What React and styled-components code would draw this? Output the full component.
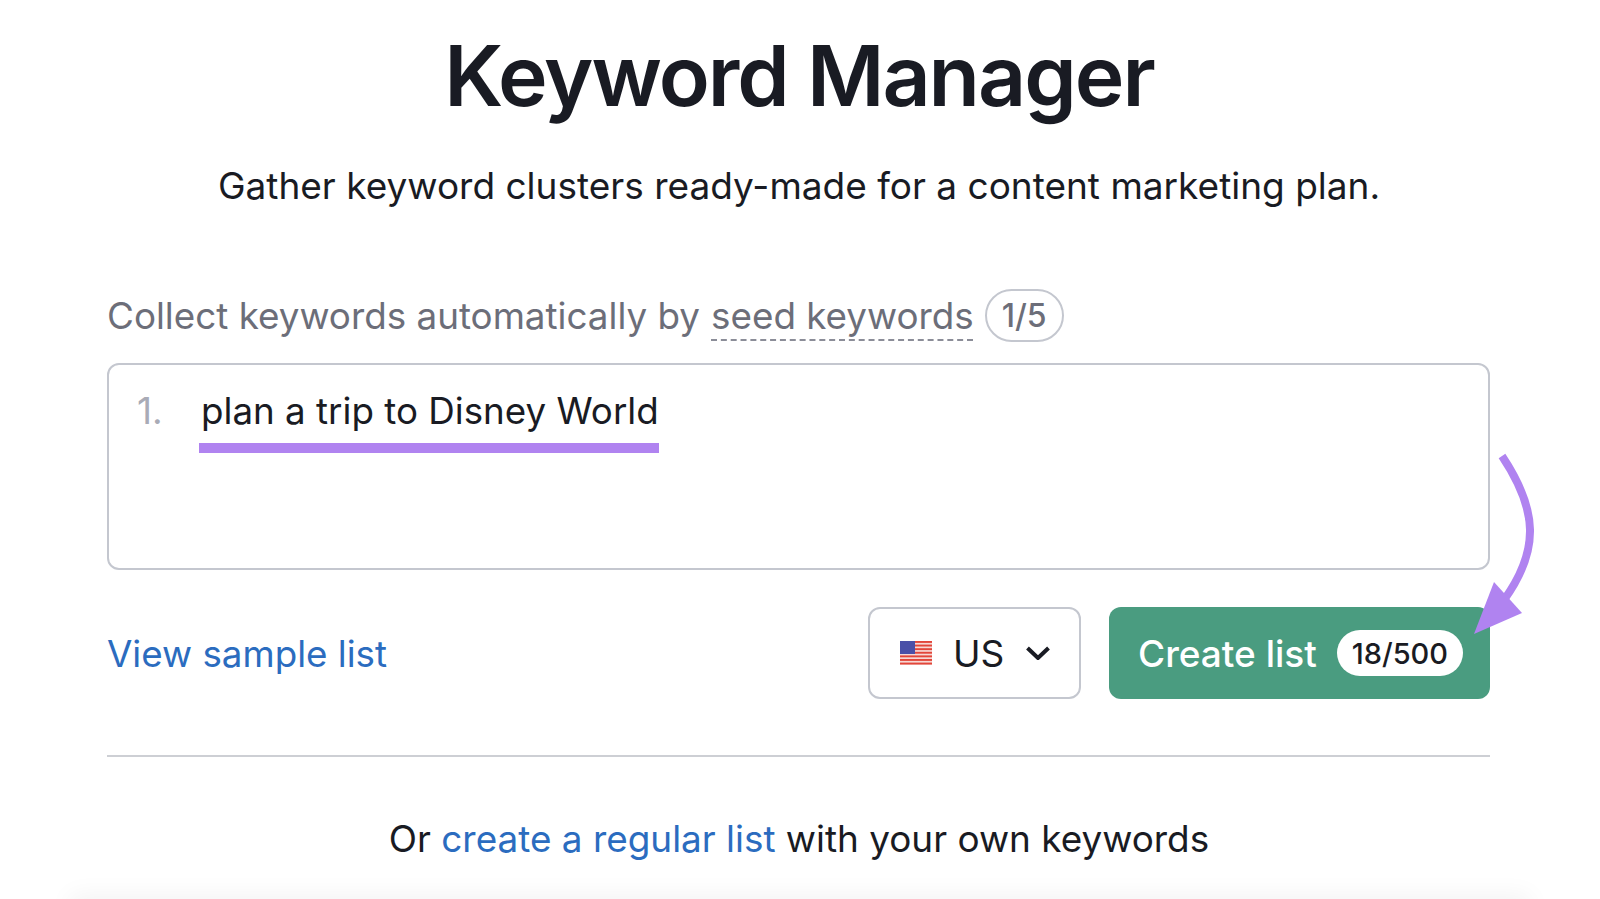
import React from "react";
import styled, { createGlobalStyle } from "styled-components";

const GlobalStyle = createGlobalStyle`
  html, body {
    margin: 0;
    height: 100%;
    background: #fff;
    font-family: Inter, "Liberation Sans", sans-serif;
    overflow: hidden;
  }
`;

const Page = styled.div`
  position: relative;
  width: 1600px;
  height: 899px;
  box-sizing: border-box;
  padding: 0 110px 0 107px;
  display: flex;
  flex-direction: column;
  overflow: hidden;
`;

const Title = styled.h1`
  margin: 26px 0 0;
  padding-left: 1px;
  font-size: 84px;
  line-height: 100px;
  font-weight: 600;
  letter-spacing: -2px;
  color: #191b23;
  text-align: center;
`;

const Subtitle = styled.p`
  margin: 38px 0 0;
  padding-left: 1px;
  font-size: 37px;
  line-height: 44px;
  color: #191b23;
  text-align: center;
`;

const Label = styled.div`
  margin-top: 80px;
  display: flex;
  align-items: center;
  height: 54px;
  font-size: 36.8px;
  color: #6c6e79;
`;

const SeedLink = styled.span`
  margin-left: 11px;
  text-decoration: underline dashed #8b8d98 2px;
  text-decoration-skip-ink: none;
  text-underline-offset: 11px;
`;

const Counter = styled.span`
  margin: 1px 0 0 11px;
  height: 53px;
  padding: 0 15px;
  display: flex;
  align-items: center;
  border: 2px solid #c4c7cf;
  border-radius: 27px;
  box-sizing: border-box;
  font-size: 32px;
  font-weight: 500;
`;

const KeywordBox = styled.div`
  margin-top: 21px;
  height: 207px;
  box-sizing: border-box;
  padding: 24px 28px;
  display: flex;
  align-items: flex-start;
  border: 2px solid #c4c7cf;
  border-radius: 12px;
`;

const LineNumber = styled.span`
  width: 62px;
  font-size: 37px;
  line-height: 44px;
  color: #a9abb6;
`;

const Keyword = styled.span`
  padding: 0 0 10px 2px;
  border-bottom: 10px solid #b083f0;
  font-size: 36.75px;
  line-height: 44px;
  color: #191b23;
`;

const Actions = styled.div`
  margin-top: 37px;
  display: flex;
  align-items: stretch;
  height: 92px;
`;

const SampleLink = styled.a`
  margin-right: auto;
  align-self: center;
  font-size: 36.75px;
  color: #2b6cbf;
`;

const Select = styled.div`
  width: 213px;
  box-sizing: border-box;
  padding: 0 29px 0 30px;
  display: flex;
  align-items: center;
  border: 2px solid #c4c7cf;
  border-radius: 12px;
  font-size: 37px;
  color: #191b23;
`;

const FlagIcon = styled.svg`
  width: 32px;
  height: 24px;
  margin-right: 21px;
`;

const Chevron = styled.svg`
  width: 24px;
  height: 14px;
  margin-left: auto;
`;

const CreateButton = styled.div`
  width: 381px;
  margin-left: 28px;
  box-sizing: border-box;
  padding: 0 27px 0 29px;
  display: flex;
  align-items: center;
  justify-content: space-between;
  border-radius: 12px;
  background: #4a9c80;
  font-size: 37px;
  font-weight: 500;
  color: #fff;
`;

const Quota = styled.span`
  height: 46px;
  padding: 0 15px;
  display: flex;
  align-items: center;
  border-radius: 24px;
  background: #fff;
  font-size: 29px;
  font-weight: 500;
  color: #191b23;
`;

const Divider = styled.hr`
  margin: 56px 0 0;
  border: 0;
  border-top: 2px solid #cdcfd4;
`;

const Footer = styled.p`
  margin: 60px 0 0;
  padding-left: 1px;
  font-size: 36.9px;
  line-height: 44px;
  color: #191b23;
  text-align: center;
`;

const FooterLink = styled.a`
  color: #2b6cbf;
`;

const BottomShade = styled.div`
  position: absolute;
  left: 70px;
  right: 70px;
  bottom: -30px;
  height: 30px;
  box-shadow: 0 -4px 24px rgba(0, 0, 0, 0.05);
`;

const ArrowMark = styled.svg`
  position: absolute;
  left: 1470px;
  top: 450px;
  width: 70px;
  height: 190px;
`;

function UsFlag() {
  const stripes = [0, 1, 2, 3, 4, 5, 6];
  return (
    <FlagIcon viewBox="0 0 32 24">
      <rect width="32" height="24" fill="#f7d8d4" />
      {stripes.map((i) => (
        <rect key={i} y={i * 3.6} width="32" height="1.9" fill="#e2463a" />
      ))}
      <rect width="15" height="13" fill="#4a50a8" />
    </FlagIcon>
  );
}

export default function App() {
  return (
    <Page>
      <GlobalStyle />
      <Title>Keyword Manager</Title>
      <Subtitle>Gather keyword clusters ready-made for a content marketing plan.</Subtitle>
      <Label>
        Collect keywords automatically by
        <SeedLink>seed keywords</SeedLink>
        <Counter>1/5</Counter>
      </Label>
      <KeywordBox>
        <LineNumber>1.</LineNumber>
        <Keyword>plan a trip to Disney World</Keyword>
      </KeywordBox>
      <Actions>
        <SampleLink>View sample list</SampleLink>
        <Select>
          <UsFlag />
          US
          <Chevron viewBox="0 0 24 14">
            <path d="M1.5 2L12 12L22.5 2" fill="none" stroke="#191b23" strokeWidth="4" />
          </Chevron>
        </Select>
        <CreateButton>
          Create list
          <Quota>18/500</Quota>
        </CreateButton>
      </Actions>
      <Divider />
      <Footer>
        Or <FooterLink>create a regular list</FooterLink> with your own keywords
      </Footer>
      <BottomShade />
      <ArrowMark viewBox="0 0 70 190">
        <path d="M32 6C68 60 70 100 34 150" fill="none" stroke="#b083f0" strokeWidth="8" />
        <path d="M4 184L24 132L52 163Z" fill="#b083f0" />
      </ArrowMark>
    </Page>
  );
}
